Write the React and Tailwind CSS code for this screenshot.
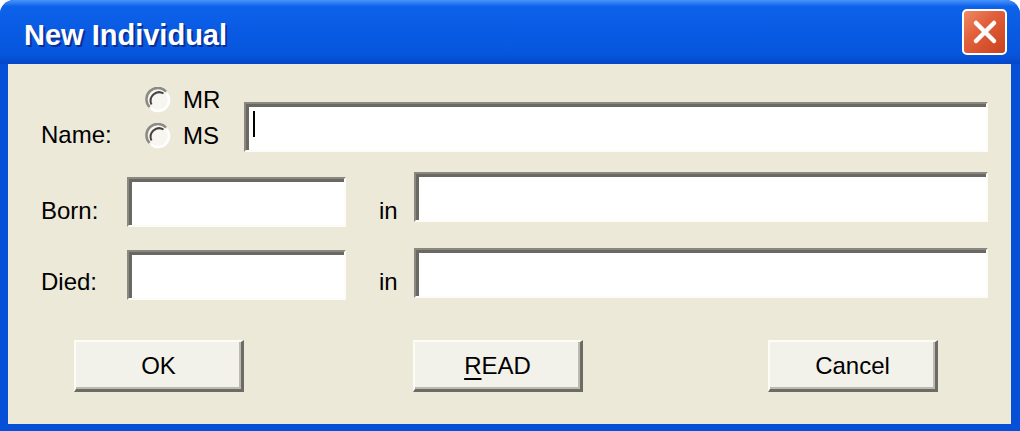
import React from 'react';

const font = { fontFamily: '"Liberation Sans", Arial, sans-serif' };

const Radio = ({ label }) => (
  <div className="flex h-[36px] items-center">
    <svg width="26" height="26" viewBox="0 0 26 26" className="mr-[12px]">
      <circle cx="13" cy="13" r="11" fill="#f7f6f0" />
      <path d="M4.5 20 A11 11 0 0 1 21 4.5" fill="none" stroke="#8c8a84" strokeWidth="2.5" />
      <path d="M6.5 17.5 A8.5 8.5 0 0 1 18.5 6.5" fill="none" stroke="#444240" strokeWidth="2" />
      <path d="M21.5 6 A11 11 0 0 1 6 21.5" fill="none" stroke="#ffffff" strokeWidth="2.5" />
    </svg>
    <span className="text-[24px] leading-[24px] text-black">{label}</span>
  </div>
);

const Field = ({ className, children }) => (
  <div
    className={`relative h-[50px] border-[2px] border-t-[#8a8881] border-l-[#8a8881] border-b-[#fdfcf6] border-r-[#fdfcf6] bg-white shadow-[inset_3px_3px_0_#6a6863] ${className}`}
  >
    {children}
  </div>
);

const Button = ({ children }) => (
  <button
    type="button"
    className="flex h-[52px] w-[170px] items-center justify-center border-t-[2px] border-l-[2px] border-b-[3px] border-r-[3px] border-t-[#fdfdf8] border-l-[#fdfdf8] border-b-[#6d6b65] border-r-[#6d6b65] bg-[#f3f2ea] text-[24px] leading-[24px] text-black shadow-[inset_-2px_-2px_0_#bdbab0]"
  >
    {children}
  </button>
);

export default function App() {
  return (
    <div className="flex h-[431px] w-[1020px] flex-col overflow-hidden rounded-t-[14px] bg-[#0650d8]" style={font}>
      {/* title bar */}
      <div className="relative flex h-[64px] shrink-0 items-center justify-between rounded-t-[14px] bg-[linear-gradient(to_bottom,#4a94fb_0%,#0d62ea_10%,#0a5be4_45%,#0656dd_85%,#0446c8_100%)] pl-[24px] pr-[13px]">
        <span className="pt-[6px] text-[29px] font-bold leading-[30px] text-white [text-shadow:2px_2px_0_#0c2f96]">
          New Individual
        </span>
        <div className="flex h-[46px] w-[45px] items-center justify-center rounded-[5px] border-[2px] border-white bg-[linear-gradient(135deg,#f08a66_0%,#e2603c_40%,#c9421d_100%)]">
          <svg width="26" height="26" viewBox="0 0 26 26">
            <path d="M4 4 L22 22 M22 4 L4 22" stroke="#ffffff" strokeWidth="4.5" strokeLinecap="round" />
          </svg>
        </div>
      </div>

      {/* body */}
      <div className="mb-[7px] ml-[8px] mr-[9px] flex grow flex-col bg-[#ece9d8] pl-[33px]">
        {/* name row */}
        <div className="mt-[18px] flex items-start">
          <span className="mt-[41px] w-[104px] text-[24px] leading-[24px] text-black">Name:</span>
          <div className="flex w-[99px] flex-col">
            <Radio label="MR" />
            <Radio label="MS" />
          </div>
          <Field className="mt-[20px] w-[744px]">
            <div className="absolute left-[7px] top-[7px] h-[26px] w-[2px] bg-black" />
          </Field>
        </div>

        {/* born row */}
        <div className="mt-[18px] flex items-start">
          <span className="mt-[27px] w-[86px] text-[24px] leading-[24px] text-black">Born:</span>
          <Field className="mt-[5px] w-[219px]" />
          <span className="mt-[27px] w-[68px] pl-[33px] text-[24px] leading-[24px] text-black">in</span>
          <Field className="w-[574px]" />
        </div>

        {/* died row */}
        <div className="mt-[21px] flex items-start">
          <span className="mt-[22px] w-[86px] text-[24px] leading-[24px] text-black">Died:</span>
          <Field className="mt-[2px] w-[219px]" />
          <span className="mt-[22px] w-[68px] pl-[33px] text-[24px] leading-[24px] text-black">in</span>
          <Field className="w-[574px]" />
        </div>

        {/* buttons */}
        <div className="ml-[33px] mt-[40px] flex">
          <Button>OK</Button>
          <div className="ml-[169px]">
            <Button>
              <span>
                <u className="decoration-[2px] underline-offset-[4px]">R</u>EAD
              </span>
            </Button>
          </div>
          <div className="ml-[185px]">
            <Button>Cancel</Button>
          </div>
        </div>
      </div>
    </div>
  );
}
